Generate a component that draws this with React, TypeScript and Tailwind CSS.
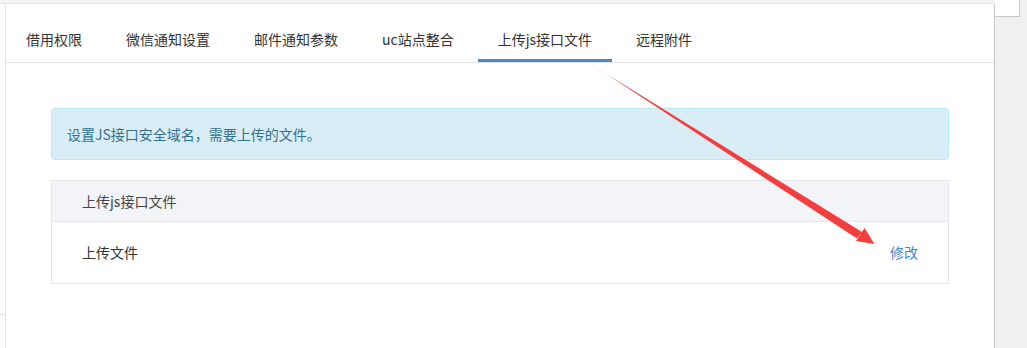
import React from "react";

const tabs = ["借用权限", "微信通知设置", "邮件通知参数", "uc站点整合", "上传js接口文件", "远程附件"];
const active = 4;

export default function App() {
  return (
    <div
      className="relative flex h-[348px] w-[1027px] overflow-hidden bg-white text-[14px] text-[#333]"
      style={{ fontFamily: '"Noto Sans CJK SC", "Noto Sans", sans-serif' }}
    >
      {/* main column */}
      <div className="flex w-[995px] flex-col">
        <div className="h-[3px] bg-[#f3f3f3]" />
        <div className="flex flex-1 border-t border-[#e6e6e6]">
          {/* left thin strip */}
          <div className="flex w-[6px] flex-col border-r border-[#e3e3e3]">
            <div className="h-[310px]" />
            <div className="h-px bg-[#dcdcdc]" />
          </div>
          <div className="flex flex-1 flex-col border-r border-[#c6c6c6]">
            {/* tabs */}
            <div className="flex gap-[4px] border-b border-[#e4e4e4]">
              {tabs.map((t, i) => (
                <div
                  key={t}
                  className={
                    i === active
                      ? "border-b-[3px] border-[#4a86c8] px-[20px] pb-[9px] pt-[25px] leading-[21px] text-[#333]"
                      : "border-b-[3px] border-transparent px-[20px] pb-[9px] pt-[25px] leading-[21px] text-[#333]"
                  }
                >
                  {t}
                </div>
              ))}
            </div>
            {/* content */}
            <div className="flex flex-col gap-[20px] px-[45px] pt-[45px]">
              <div className="rounded-[4px] border border-[#bce8f1] bg-[#d9edf7] px-[15px] py-[15px] leading-[20px] text-[#31708f]">
                设置JS接口安全域名，需要上传的文件。
              </div>
              <div className="border border-[#e4e6ea]">
                <div className="border-b border-[#e4e6ea] bg-[#f3f4f7] px-[30px] py-[10px] leading-[20px] text-[#444]">
                  上传js接口文件
                </div>
                <div className="flex items-center justify-between px-[30px] py-[20px] leading-[21px]">
                  <span className="text-[#333]">上传文件</span>
                  <span className="text-[#3f86cb]">修改</span>
                </div>
              </div>
            </div>
          </div>
        </div>
      </div>
      {/* right gray area */}
      <div className="flex flex-1 flex-col bg-[#f0f0f0]">
        <div className="h-[17px] w-[25px] border-b border-r border-[#c8c8c8] bg-white" />
      </div>

      {/* red annotation arrow */}
      <svg className="pointer-events-none absolute left-0 top-0" width="1027" height="348" viewBox="0 0 1027 348">
        <polygon points="598,68.6 599.2,69.4 862,232 857,238.5" fill="#f53d3d" />
        <polygon points="864.5,228 874.5,244 856,241" fill="#f53d3d" />
      </svg>
    </div>
  );
}
